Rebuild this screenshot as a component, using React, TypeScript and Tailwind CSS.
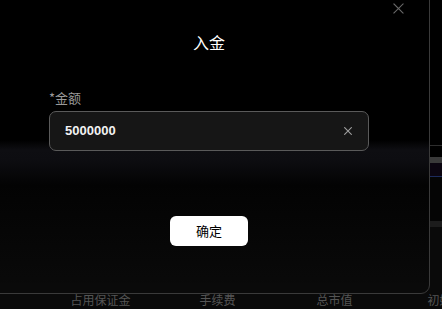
import React from 'react';

function CloseIcon({ size, stroke, color }: { size: number; stroke: number; color: string }) {
  return (
    <svg width={size} height={size} viewBox="0 0 12 12" fill="none">
      <path d="M1 1L11 11M11 1L1 11" stroke={color} strokeWidth={stroke} strokeLinecap="square" />
    </svg>
  );
}

const columns = ['占用保证金', '手续费', '总市值', '初始资金'];

export default function App() {
  return (
    <div className="relative w-[442px] h-[309px] overflow-hidden bg-[#0a0a0a] font-['Noto_Sans_CJK_SC',sans-serif]">
      {/* page behind the dialog */}
      <div className="flex flex-col h-full">
        <div className="flex h-[293px]">
          <div className="flex-1 bg-[linear-gradient(to_bottom,#000_0px,#000_140px,#0e0e12_150px,#0d0d11_160px,#030303_185px,#060606_230px,#0a0a0a_293px)]" />
          <div className="w-[13px] flex flex-col bg-black">
            <div className="h-[145px]" />
            <div className="h-px bg-[#2e2e2e]" />
            <div className="h-[11px]" />
            <div className="h-[6px] bg-[#3a3a3a]" />
            <div className="h-[13px] bg-[#0b0510]" />
            <div className="h-px bg-[#1d2b5c]" />
            <div className="h-[44px] bg-[#050505]" />
            <div className="h-[6px] bg-[#1c1c1c]" />
            <div className="flex-1 bg-[#0a0a0a]" />
          </div>
        </div>
        <div className="flex pl-[42px] pt-[8px] text-[12px] leading-[18px] text-[#555] whitespace-nowrap">
          {columns.map((c) => (
            <div key={c} className="w-[117px] shrink-0 text-center">{c}</div>
          ))}
        </div>
      </div>

      {/* dialog */}
      <div className="absolute left-[-12px] top-[-10px] w-[442px] h-[304px] rounded-[9px] border border-[#3a3a3a] flex flex-col items-center pt-[39px]">
        <button className="absolute right-[25px] top-[12px] flex items-center justify-center">
          <CloseIcon size={11} stroke={1.2} color="#6a6a6a" />
        </button>
        <div className="text-[16px] leading-[24px] font-normal text-white">入金</div>
        <div className="w-[320px] mt-[34px]">
          <div className="text-[13px] leading-[20px] text-[#9a9a9a]">*金额</div>
          <div className="mt-[3px] h-[40px] rounded-[7px] border border-[#5a5a5a] bg-[#161616] flex items-center pl-[15px] pr-[16px]">
            <span className="flex-1 font-['Liberation_Sans',sans-serif] font-bold text-[13px] text-[#f2f2f2]">5000000</span>
            <CloseIcon size={8} stroke={1.6} color="#a0a0a0" />
          </div>
        </div>
        <button className="mt-[65px] w-[78px] h-[30px] rounded-[6px] bg-white text-[13px] text-black">确定</button>
      </div>
    </div>
  );
}
